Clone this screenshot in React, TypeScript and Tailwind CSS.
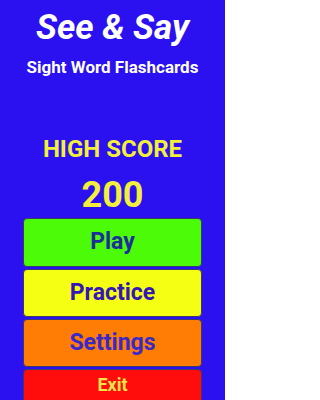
import React from "react";

export default function App() {
  return (
    <div className="w-[225px] h-[400px] overflow-hidden bg-[#2b10f0] font-['Roboto','Liberation_Sans',sans-serif] flex flex-col items-center">
      <h1 className="mt-[10px] text-[35px] leading-[36px] italic font-bold text-white">See &amp; Say</h1>
      <p className="mt-[11px] text-[17px] leading-[20px] font-bold text-white">Sight Word Flashcards</p>
      <p className="mt-[59px] text-[24px] leading-[26px] font-bold text-[#f2f03a]">HIGH SCORE</p>
      <p className="mt-[15px] text-[36px] leading-[36px] font-bold text-[#f2f03a]">200</p>
      <div className="mt-[5px] w-[179px] flex flex-col gap-[2px]">
        <button className="h-[49px] rounded-[4px] border border-[#3a3a6a] bg-[#4cfb08] text-[23px] font-bold text-[#1c2e9c]">Play</button>
        <button className="h-[48px] rounded-[4px] border border-[#3a3a6a] bg-[#f4ff14] text-[23px] font-bold text-[#3516b8]">Practice</button>
        <button className="h-[48px] rounded-[4px] border border-[#3a3a6a] bg-[#ff7d05] text-[23px] font-bold text-[#3a28c8]">Settings</button>
        <button className="h-[40px] rounded-[4px] border border-[#3a3a6a] bg-[#ff0c0c] text-[18px] leading-[20px] font-bold text-[#f2e44a] pb-[8px]">Exit</button>
      </div>
    </div>
  );
}
